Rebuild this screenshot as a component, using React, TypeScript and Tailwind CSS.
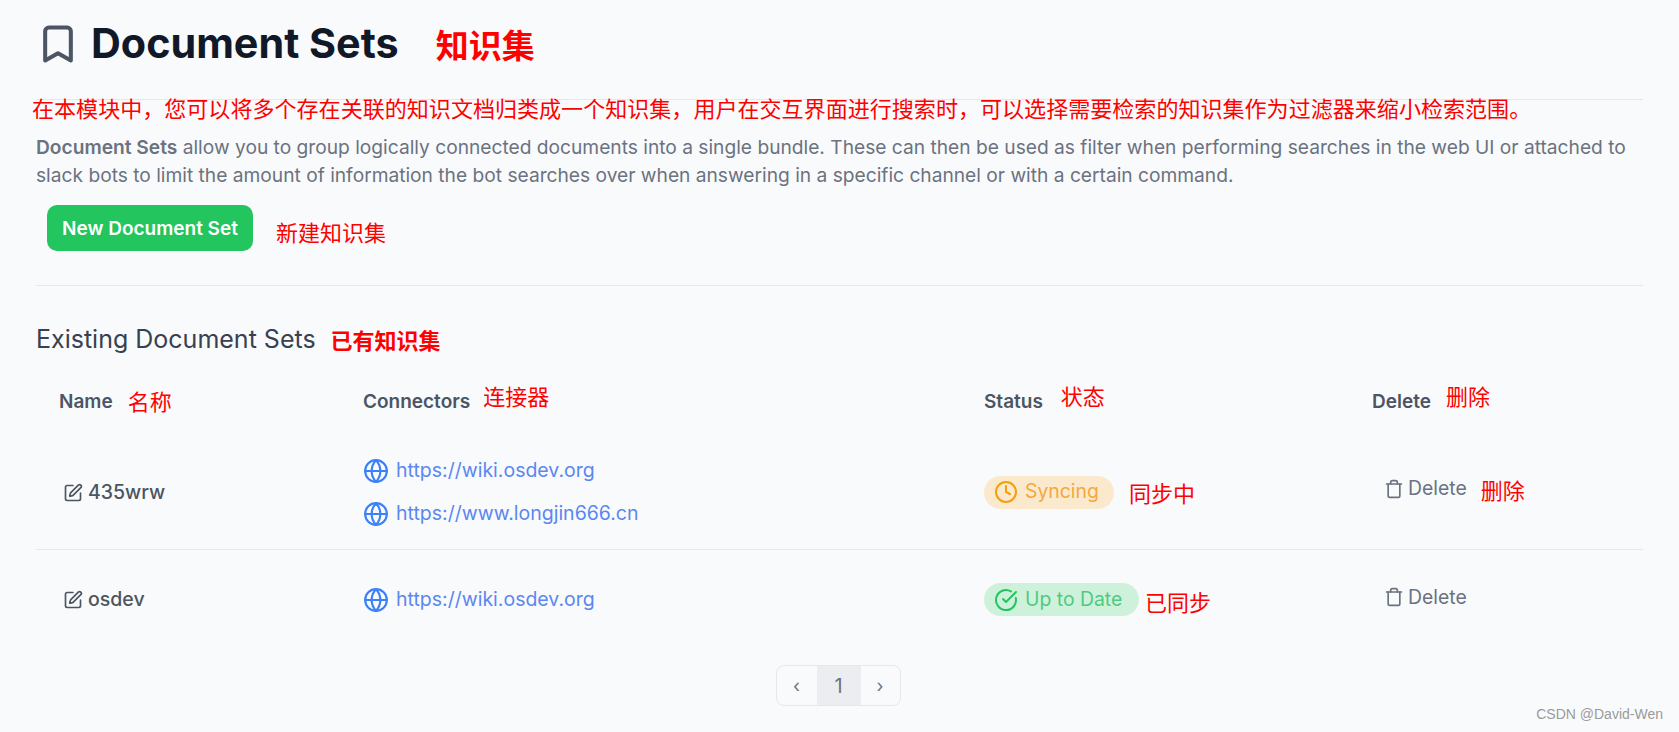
import { Bookmark, CircleCheckBig, Clock, Globe, SquarePen, Trash } from 'lucide-react'

const cjk = "font-['Noto_Sans_CJK_SC',sans-serif] font-normal text-[#ff0000]"

function Note({ text, className = '' }: { text: string; className?: string }) {
  return <span className={`${cjk} whitespace-nowrap text-[22px] leading-[30px] ${className}`}>{text}</span>
}

function ConnectorLink({ url }: { url: string }) {
  return (
    <div className="flex h-[43px] items-center gap-[7px]">
      <Globe className="h-[26px] w-[26px] text-[#3b82f6]" strokeWidth={2} />
      <span className="text-[19.5px] text-[#5b87f0]">{url}</span>
    </div>
  )
}

function DeleteAction({ note, className = '' }: { note?: string; className?: string }) {
  return (
    <div className={`ml-[12px] flex items-center text-[#6b7280] ${className}`}>
      <Trash className="h-[20px] w-[20px]" strokeWidth={2} />
      <span className="ml-[4px] text-[19.4px]">Delete</span>
      {note && <Note text={note} className="ml-[14px]" />}
    </div>
  )
}

export default function App() {
  return (
    <div className="relative h-[732px] w-full overflow-hidden bg-[#f9fafc] px-[36px] font-['Inter',sans-serif]">
      <div className="flex h-[100px] items-start border-b border-[#e5e7eb] pt-[20px]">
        <Bookmark className="mt-[2px] h-[44px] w-[44px] text-[#4b5563]" strokeWidth={2.2} />
        <h1 className="ml-[11px] text-[41.3px] font-bold leading-[46px] text-[#111827]">Document Sets</h1>
        <span className={`${cjk} ml-[37px] mt-[1px] text-[33px] leading-[46px] !font-bold`}>知识集</span>
      </div>

      {/* annotation sits across the divider */}
      <div className={`${cjk} absolute left-[32px] top-[95px] whitespace-nowrap text-[22.05px] leading-[24px]`}>
        在本模块中，您可以将多个存在关联的知识文档归类成一个知识集，用户在交互界面进行搜索时，可以选择需要检索的知识集作为过滤器来缩小检索范围。
      </div>

      <p className="mt-[34px] text-[19.18px] leading-[27.5px] text-[#6b7280]">
        <b className="font-semibold">Document Sets</b> allow you to group logically connected documents into a single bundle. These can then be used as filter when performing searches in the web UI or attached to slack bots to limit the amount of information the bot searches over when answering in a specific channel or with a certain command.
      </p>

      <div className="ml-[11px] mt-[16px] flex items-center">
        <button className="h-[46px] w-[206px] rounded-[10px] bg-[#22c55e] pt-[3px] text-[19px] font-semibold text-white">
          New Document Set
        </button>
        <Note text="新建知识集" className="ml-[23px] mt-[6px]" />
      </div>

      <div className="mt-[34px] border-t border-[#e5e7eb]" />

      <div className="mt-[37px] flex items-center">
        <h2 className="text-[25px] leading-[32px] text-[#374151]">Existing Document Sets</h2>
        <Note text="已有知识集" className="ml-[15px] !font-bold" />
      </div>

      <div className="mt-[27px] grid h-[40px] grid-cols-[304px_621px_388px_1fr] items-center pl-[23px] text-[19px] font-semibold text-[#4b5563]">
        <div className="flex items-center">Name<Note text="名称" className="ml-[15px] -mt-[5px]" /></div>
        <div className="flex items-center">Connectors<Note text="连接器" className="ml-[13px] -mt-[14px]" /></div>
        <div className="flex items-center">Status<Note text="状态" className="ml-[18px] -mt-[14px]" /></div>
        <div className="flex items-center">Delete<Note text="删除" className="ml-[15px] -mt-[14px]" /></div>
      </div>

      <div className="grid h-[128px] grid-cols-[304px_621px_388px_1fr] items-center border-b border-[#e5e7eb] pl-[23px] pt-[14px]">
        <div className="ml-[4px] flex items-center gap-[5px] text-[19.5px] font-medium text-[#4b5563]">
          <SquarePen className="h-[20px] w-[20px]" strokeWidth={2} />
          435wrw
        </div>
        <div>
          <ConnectorLink url="https://wiki.osdev.org" />
          <ConnectorLink url="https://www.longjin666.cn" />
        </div>
        <div className="mb-[1px] flex items-center">
          <span className="flex h-[33px] w-[130px] items-center gap-[7px] rounded-full bg-[#fbe9cd] pl-[10px] text-[19.4px] text-[#f5a83a]">
            <Clock className="h-[24px] w-[24px] text-[#f59e0b]" strokeWidth={2} />
            Syncing
          </span>
          <Note text="同步中" className="ml-[15px]" />
        </div>
        <DeleteAction note="删除" className="mb-[7px]" />
      </div>

      <div className="grid h-[99px] grid-cols-[304px_621px_388px_1fr] items-center pl-[23px]">
        <div className="ml-[4px] flex items-center gap-[5px] text-[19.5px] font-medium text-[#4b5563]">
          <SquarePen className="h-[20px] w-[20px]" strokeWidth={2} />
          osdev
        </div>
        <ConnectorLink url="https://wiki.osdev.org" />
        <div className="flex items-center">
          <span className="flex h-[33px] w-[155px] items-center gap-[7px] rounded-full bg-[#cef1dc] pl-[10px] text-[19.4px] text-[#4fcb7f]">
            <CircleCheckBig className="h-[24px] w-[24px] text-[#22c55e]" strokeWidth={2} />
            Up to Date
          </span>
          <Note text="已同步" className="ml-[6px] mt-[2px]" />
        </div>
        <DeleteAction className="mb-[4px]" />
      </div>

      <div className="mt-[16px] flex justify-center">
        <div className="ml-[-3px] flex h-[41px] items-stretch overflow-hidden rounded-[8px] border border-[#e5e7eb] text-[#6b7280]">
          <span className="flex w-[40px] items-center justify-center text-[18px]">‹</span>
          <span className="flex w-[44px] items-center justify-center bg-[#ebedf0] text-[20px]">1</span>
          <span className="flex w-[39px] items-center justify-center text-[18px]">›</span>
        </div>
      </div>

      <span className="absolute bottom-[7px] right-[16px] font-['Liberation_Sans',sans-serif] text-[14px] text-[#9a9a9a]">CSDN @David-Wen</span>
    </div>
  )
}
